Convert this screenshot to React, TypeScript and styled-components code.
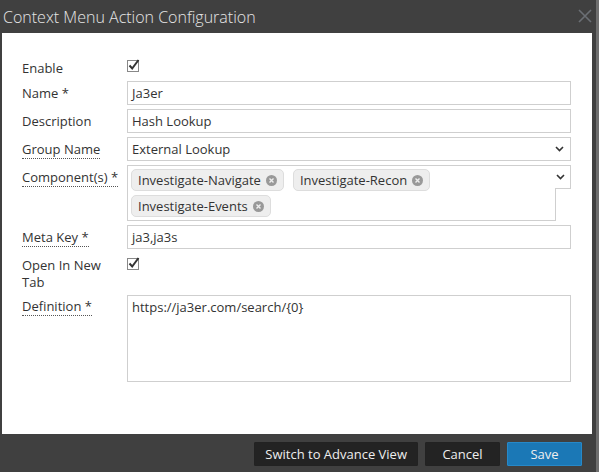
import React from 'react';
import styled, {createGlobalStyle} from 'styled-components';

const GlobalStyle = createGlobalStyle`
  html, body {
    margin: 0;
    padding: 0;
    background: #404040;
  }
  body {
    font-family: "Open Sans", "Liberation Sans", sans-serif;
  }
`;

const Dialog = styled.div`
  width: 599px;
  height: 472px;
  box-sizing: border-box;
  background: #404040;
  display: flex;
  flex-direction: column;
  border-right: 3px solid #6e6e6e;
`;

const TitleBar = styled.div`
  height: 33px;
  flex-shrink: 0;
  display: flex;
  align-items: center;
  justify-content: space-between;
  padding: 0 4px 0 3px;
  color: #e6e6e6;
  font-size: 16px;
  font-weight: 300;
`;

const CloseIcon = styled.svg`
  width: 14px;
  height: 14px;
  margin-bottom: 2px;
`;

const Body = styled.div`
  flex: 1;
  background: #fff;
  margin: 0 4px 0 2px;
  padding: 22px 21px 0 20px;
  box-sizing: border-box;
`;

const Form = styled.div`
  display: grid;
  grid-template-columns: 105px 444px;
  row-gap: 4px;
  align-items: start;
`;

const Label = styled.div<{hint?: boolean; top?: number; wrap?: boolean}>`
  font-size: 13px;
  line-height: ${p => p.wrap ? 17 : 18}px;
  color: #333;
  padding-top: ${p => p.top ?? 3}px;
  padding-right: 12px;
  white-space: ${p => p.wrap ? 'normal' : 'nowrap'};

  span {
    border-bottom: ${p => p.hint ? '1px dotted #555' : 'none'};
  }
`;

const Input = styled.div`
  height: 24px;
  box-sizing: border-box;
  border: 1px solid #cfcfcf;
  padding: 0 4px;
  display: flex;
  align-items: center;
  font-size: 13px;
  color: #333;
`;

const Select = styled(Input)`
  justify-content: space-between;
  padding-right: 6px;
`;

const TextArea = styled(Input)`
  height: 87px;
  align-items: flex-start;
  padding-top: 2px;
`;

const CheckWrap = styled.div`
  display: flex;
  align-items: flex-start;
  padding-top: 4px;
`;

const MultiSelect = styled.div`
  display: flex;
  align-items: flex-start;
`;

const TagBox = styled.div`
  width: 429px;
  min-height: 56px;
  box-sizing: border-box;
  border: 1px solid #cfcfcf;
  padding: 3px;
  display: flex;
  flex-wrap: wrap;
  gap: 4px 9px;
  align-content: flex-start;
`;

const ArrowBox = styled.div`
  width: 16px;
  height: 24px;
  box-sizing: border-box;
  border: 1px solid #cfcfcf;
  border-left: none;
  margin-left: -1px;
  background: #fff;
  display: flex;
  align-items: center;
  justify-content: flex-end;
  padding-right: 5px;
  position: relative;
`;

const Tag = styled.div`
  height: 22px;
  box-sizing: border-box;
  background: #eee;
  border: 1px solid #ddd;
  border-radius: 5px;
  padding: 0 6px;
  display: flex;
  align-items: center;
  gap: 5px;
  font-size: 13px;
  color: #333;
`;

const Footer = styled.div`
  height: 37px;
  flex-shrink: 0;
  display: flex;
  justify-content: flex-end;
  align-items: center;
  gap: 7px;
  padding: 1px 14px 0 0;
`;

const Button = styled.button<{primary?: boolean}>`
  height: 24px;
  padding: 0 10px;
  min-width: 75px;
  border: 1px solid ${p => p.primary ? '#2689c9' : '#222'};
  background: ${p => p.primary ? '#1b78b6' : '#232323'};
  color: #eee;
  font-family: "Open Sans", "Liberation Sans", sans-serif;
  font-size: 13px;
  border-radius: 1px;
`;

const Chevron = () => (
  <svg width="9" height="6" viewBox="0 0 9 6">
    <path d="M1 1 L4.5 4.5 L8 1" stroke="#333" strokeWidth="1.6" fill="none"/>
  </svg>
);

const Check = () => (
  <svg width="14" height="14" viewBox="0 0 14 14">
    <rect x="0.5" y="1.5" width="11" height="11" fill="#fff" stroke="#888"/>
    <path d="M2.5 6.5 L5.2 9.5 L11.5 1" stroke="#333" strokeWidth="2" fill="none"/>
  </svg>
);

const RemoveIcon = () => (
  <svg width="11" height="11" viewBox="0 0 11 11">
    <circle cx="5.5" cy="5.5" r="5.5" fill="#999"/>
    <path d="M3.5 3.5 L7.5 7.5 M7.5 3.5 L3.5 7.5" stroke="#eee" strokeWidth="1.4"/>
  </svg>
);

const components = ['Investigate-Navigate', 'Investigate-Recon', 'Investigate-Events'];

const App = () => {
  return (
    <>
      <GlobalStyle/>
      <Dialog>
        <TitleBar>
          <span>Context Menu Action Configuration</span>
          <CloseIcon viewBox="0 0 14 14">
            <path d="M1 1 L13 13 M13 1 L1 13" stroke="#6b6f75" strokeWidth="1.6"/>
          </CloseIcon>
        </TitleBar>
        <Body>
          <Form>
            <Label top={4}><span>Enable</span></Label>
            <CheckWrap><Check/></CheckWrap>

            <Label><span>Name *</span></Label>
            <Input>Ja3er</Input>

            <Label><span>Description</span></Label>
            <Input>Hash Lookup</Input>

            <Label hint><span>Group Name</span></Label>
            <Select>External Lookup<Chevron/></Select>

            <Label hint><span>Component(s) *</span></Label>
            <MultiSelect>
              <TagBox>
                {components.map(c => (
                  <Tag key={c}>{c}<RemoveIcon/></Tag>
                ))}
              </TagBox>
              <ArrowBox><Chevron/></ArrowBox>
            </MultiSelect>

            <Label hint><span>Meta Key *</span></Label>
            <Input>ja3,ja3s</Input>

            <Label top={4} wrap><span>Open In New Tab</span></Label>
            <CheckWrap><Check/></CheckWrap>

            <Label hint top={2}><span>Definition *</span></Label>
            <TextArea>https://ja3er.com/search/{'{0}'}</TextArea>
          </Form>
        </Body>
        <Footer>
          <Button>Switch to Advance View</Button>
          <Button>Cancel</Button>
          <Button primary>Save</Button>
        </Footer>
      </Dialog>
    </>
  );
};

export default App;
